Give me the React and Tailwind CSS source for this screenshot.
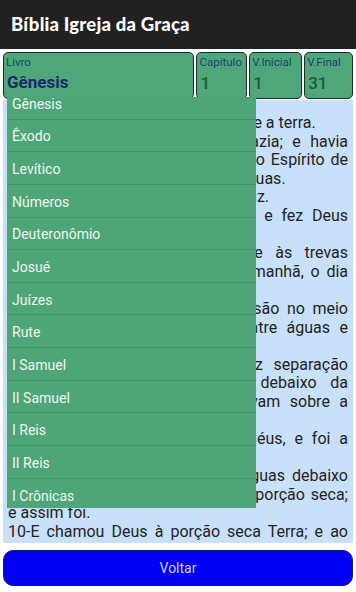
const books = ['Gênesis', 'Êxodo', 'Levítico', 'Números', 'Deuteronômio', 'Josué', 'Juízes', 'Rute', 'I Samuel', 'II Samuel', 'I Reis', 'II Reis', 'I Crônicas'];

// each line as the app wraps it; j = justified line
const lines = [
  ['1-No princípio, criou Deus os céus e a terra.'],
  ['2-E a terra era sem forma e vazia; e havia', 'j'],
  ['trevas sobre a face do abismo; e o Espírito de', 'j'],
  ['Deus se movia sobre a face das águas.'],
  ['3-E disse Deus: Haja luz; e houve luz.'],
  ['4-E viu Deus que era boa a luz; e fez Deus', 'j'],
  ['separação entre a luz e as trevas.'],
  ['5-E Deus chamou à luz Dia; e às trevas', 'j'],
  ['chamou Noite. E foi a tarde e a manhã, o dia', 'j'],
  ['primeiro.'],
  ['6-E disse Deus: Haja uma expansão no meio', 'j'],
  ['das águas, e haja separação entre águas e', 'j'],
  ['águas.'],
  ['7-E fez Deus a expansão, e fez separação', 'j'],
  ['entre as águas que estavam debaixo da', 'j'],
  ['expansão e as águas que estavam sobre a', 'j'],
  ['expansão; e assim foi.'],
  ['8-E chamou Deus à expansão Céus, e foi a', 'j'],
  ['tarde e a manhã, o dia segundo.'],
  ['9-E disse Deus: Ajuntem-se as águas debaixo', 'j'],
  ['dos céus num lugar; e apareça a porção seca;', 'j'],
  ['e assim foi.'],
  ['10-E chamou Deus à porção seca Terra; e ao', 'j'],
  ['ajuntamento das águas chamou Mares; e viu', 'j'],
];

function Field({ label, value, className, valueClass }) {
  return (
    <div className={`flex flex-col rounded-[5px] border border-[#1d2b22] bg-[#4fa67a] ${className}`}>
      <span className="pl-[2px] pt-[2px] text-[11.5px] leading-[14px] text-[#1b3f72]">{label}</span>
      <span className={valueClass}>{value}</span>
    </div>
  );
}

export default function App() {
  return (
    <div className="relative flex h-[592px] w-[356px] flex-col overflow-hidden bg-white font-['Roboto',sans-serif]">
      <header className="flex h-[49px] shrink-0 items-center bg-[#212121] px-[11px]">
        <h1 className="font-['Lato',sans-serif] text-[18.5px] font-black tracking-[0.2px] text-white">Bíblia Igreja da Graça</h1>
      </header>

      <div className="mt-[3px] flex h-[47px] shrink-0 gap-[2px] px-[3px]">
        <Field label="Livro" value="Gênesis" className="w-[192px]" valueClass="pl-[3px] pt-[3px] text-[17px] font-bold leading-[20px] text-[#1a2a6c]" />
        <Field label="Capítulo" value="1" className="w-[51px]" valueClass="pl-[3px] pt-[4px] text-[17px] font-medium leading-[20px] text-[#1d5c3b]" />
        <Field label="V.Inicial" value="1" className="w-[53px]" valueClass="pl-[3px] pt-[4px] text-[17px] font-medium leading-[20px] text-[#1d5c3b]" />
        <Field label="V.Final" value="31" className="w-[49px]" valueClass="pl-[3px] pt-[4px] text-[17px] font-medium leading-[20px] text-[#1d5c3b]" />
      </div>

      <div className="mx-[3px] mt-[1px] h-[443px] shrink-0 overflow-hidden bg-[#c8e0f9] px-[5px] pt-[14px] text-[16px] leading-[18.6px] text-[#1f1f1f]">
        {lines.map(([t, j]) => (
          <div key={t} className={j ? 'whitespace-nowrap text-justify [text-align-last:justify]' : 'whitespace-nowrap'}>{t}</div>
        ))}
      </div>

      <button type="button" className="mx-[3px] mt-[7px] h-[36px] shrink-0 rounded-[10px] border border-[#1b1b6b] bg-[#0000f2] text-[14px] text-[#cfcfff]">Voltar</button>

      <div className="absolute left-[7px] top-[97px] h-[411px] w-[249px] overflow-hidden bg-[#4ea577]">
        <ul className="-mt-[10px]">
          {books.map((b) => (
            <li key={b} className="flex h-[32.65px] items-center border-b border-[#43946a] pl-[5px] pt-[3px] text-[14px] text-[#eef6f0]">{b}</li>
          ))}
        </ul>
      </div>
    </div>
  );
}
